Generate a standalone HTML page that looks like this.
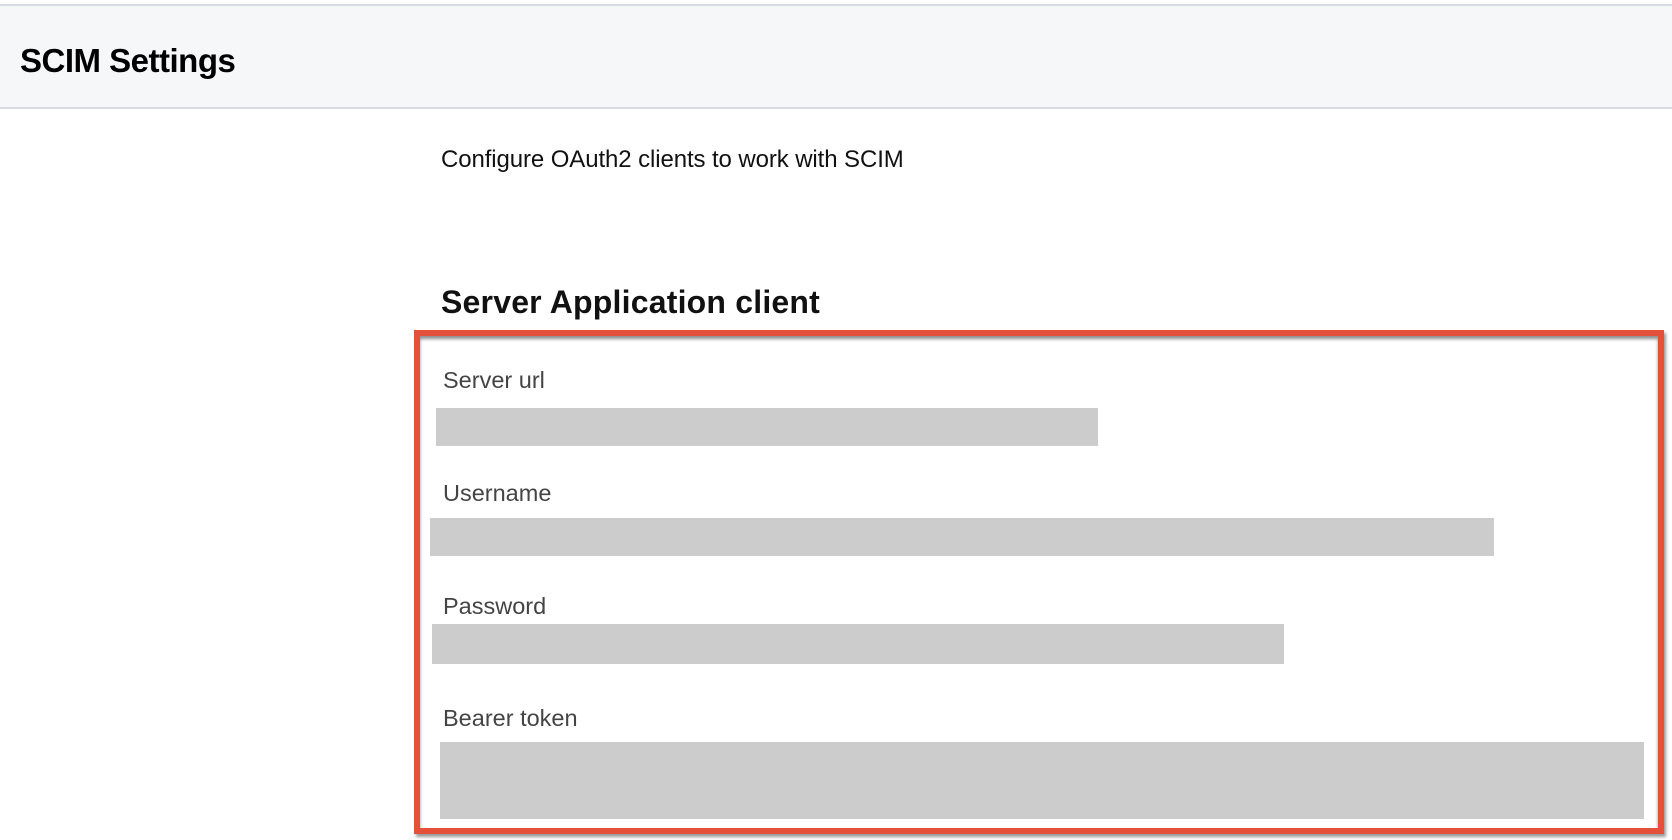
<!DOCTYPE html>
<html><head><meta charset="utf-8"><style>
html,body{margin:0;padding:0;width:1672px;height:840px;background:#fff;overflow:hidden;font-family:"Liberation Sans",Arial,sans-serif;position:relative}
.hdr{position:absolute;left:0;top:4px;width:1672px;height:101px;background:#f6f7f9;border-top:2px solid #d5dbe1;border-bottom:2px solid #d5dbe1}
.hdr h1{position:absolute;left:20px;top:35px;margin:0;font-size:33px;font-weight:bold;color:#000;letter-spacing:-0.5px;line-height:40px}
.t{position:absolute;white-space:nowrap}
.desc{left:441px;top:146px;font-size:24px;color:#111;line-height:28px;letter-spacing:-0.1px}
.h2{left:441px;top:283px;font-size:32px;font-weight:bold;color:#111;line-height:38px;letter-spacing:0.2px}
.box{position:absolute;left:414px;top:330px;width:1238px;height:492px;border:6px solid #e4503a;box-shadow:inset 0 3px 3px rgba(0,0,0,.45),2px 3px 3px rgba(0,0,0,.4)}
.lbl{font-size:23.5px;color:#444;line-height:26px}
.in{position:absolute;background:#cccccc}
</style></head><body>
<div class="hdr"><h1>SCIM Settings</h1></div>
<div class="t desc">Configure OAuth2 clients to work with SCIM</div>
<div class="t h2">Server Application client</div>
<div class="box"></div>
<div class="t lbl" style="left:443px;top:367px">Server url</div>
<div class="in" style="left:436px;top:408px;width:662px;height:38px"></div>
<div class="t lbl" style="left:443px;top:480px">Username</div>
<div class="in" style="left:430px;top:518px;width:1064px;height:38px"></div>
<div class="t lbl" style="left:443px;top:593px">Password</div>
<div class="in" style="left:432px;top:624px;width:852px;height:40px"></div>
<div class="t lbl" style="left:443px;top:705px">Bearer token</div>
<div class="in" style="left:440px;top:742px;width:1204px;height:77px"></div>
</body></html>
